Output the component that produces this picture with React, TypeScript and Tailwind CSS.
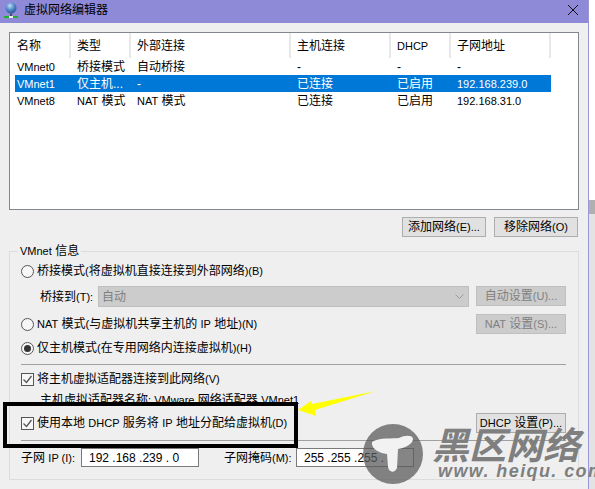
const sans = "font-['Liberation_Sans','Noto_Sans_CJK_SC',sans-serif]";

const columns = [
  { label: "名称", w: "w-[56px]", pl: "pl-[2px]" },
  { label: "类型", w: "w-[60px]", pl: "pl-[6px]" },
  { label: "外部连接", w: "w-[160px]", pl: "pl-[6px]" },
  { label: "主机连接", w: "w-[100px]", pl: "pl-[6px]" },
  { label: "DHCP", w: "w-[60px]", pl: "pl-[6px]" },
  { label: "子网地址", w: "w-[100px]", pl: "pl-[6px]" },
];

const rows = [
  { cells: [<L>VMnet0</L>, "桥接模式", "自动桥接", "-", "-", "-"], selected: false },
  { cells: [<L>VMnet1</L>, "仅主机...", "-", "已连接", "已启用", <L>192.168.239.0</L>], selected: true },
  { cells: [<L>VMnet8</L>, <><L>NAT</L> 模式</>, <><L>NAT</L> 模式</>, "已连接", "已启用", <L>192.168.31.0</L>], selected: false },
];

// latin runs sit a pixel smaller than the CJK in the original
function L({ children }: { children: React.ReactNode }) {
  return <span className="text-[11px]">{children}</span>;
}

function NetIcon() {
  return (
    <svg width="14" height="16" viewBox="0 0 14 16" className="shrink-0">
      <defs>
        <radialGradient id="globe" cx="0.4" cy="0.3" r="0.8">
          <stop offset="0" stopColor="#c4dcf4" />
          <stop offset="0.5" stopColor="#4f86c8" />
          <stop offset="1" stopColor="#274a86" />
        </radialGradient>
      </defs>
      <circle cx="7" cy="6" r="5.5" fill="url(#globe)" />
      <rect x="6" y="11.5" width="2" height="2.5" fill="#4a4a5a" />
      <rect x="0" y="14" width="14" height="2" fill="#1fae2f" />
      <rect x="5" y="14" width="4" height="2" fill="#e8f5e8" />
    </svg>
  );
}

function Radio({ checked }: { checked?: boolean }) {
  return (
    <span className="w-[13px] h-[13px] rounded-full border border-[#555] bg-[#f7f7f7] flex items-center justify-center shrink-0">
      {checked && <span className="w-[7px] h-[7px] rounded-full bg-[#333]" />}
    </span>
  );
}

function Check() {
  return (
    <span className="w-[13px] h-[13px] border border-[#555] bg-[#f7f7f7] flex items-center justify-center shrink-0">
      <svg width="11" height="11" viewBox="0 0 11 11">
        <path d="M1.5 5.5 L4.5 8.5 L9.5 2" stroke="#555" strokeWidth="1.3" fill="none" />
      </svg>
    </span>
  );
}

function Btn({ children, w, disabled }: { children: React.ReactNode; w: string; disabled?: boolean }) {
  return (
    <div className={`${w} h-5 flex items-center justify-center border text-xs whitespace-pre shrink-0 ${disabled ? "border-[#bfbfbf] bg-[#cccccc] text-[#808080]" : "border-[#adadad] bg-[#e1e1e1] text-black"}`}>
      {children}
    </div>
  );
}

function IpBox({ value, w }: { value: string; w: string }) {
  return (
    <div className={`${w} h-[19px] border border-[#7a7a7a] bg-white text-xs flex items-center pl-[7px] whitespace-pre shrink-0`}>
      {value}
    </div>
  );
}

export default function App() {
  return (
    <div className={`relative w-[595px] h-[489px] overflow-hidden flex text-black text-xs ${sans}`}>
      <div className="w-[589px] h-full bg-[#efefef] flex flex-col border-r border-[#9a98d8] shrink-0">
        <div className="h-[23px] bg-[#8e8ad8] flex items-center pl-1 pr-[10px] pb-[3px] shrink-0">
          <NetIcon />
          <span className="ml-[6px]">虚拟网络编辑器</span>
          <svg className="ml-auto" width="10" height="10" viewBox="0 0 10 10">
            <path d="M0 0 L10 10 M10 0 L0 10" stroke="#111" strokeWidth="1" fill="none" />
          </svg>
        </div>

        <div className="flex-1 flex flex-col pl-[9px] pt-[9px]">
          <div className="w-[570px] h-[178px] border border-[#82878f] bg-white pl-[5px] shrink-0">
            <div className="flex h-[25px] items-center">
              {columns.map((c) => (
                <div key={c.label} className={`${c.w} ${c.pl} h-full pt-px flex items-center border-r-2 border-[#e8e8e8]`}>
                  {c.label === "DHCP" ? <L>{c.label}</L> : c.label}
                </div>
              ))}
            </div>
            {rows.map((r, n) => (
              <div key={n} className={`flex h-[17px] w-[536px] items-center ${r.selected ? "bg-[#0078d7] text-white" : ""}`}>
                {r.cells.map((t, i) => (
                  <div key={i} className={`${columns[i].w} ${columns[i].pl} whitespace-nowrap`}>{t}</div>
                ))}
              </div>
            ))}
          </div>

          <div className="flex justify-end gap-2 mt-[7px] w-[570px] pr-px">
            <Btn w="w-[84px]">添加网络<L>(E)...</L></Btn>
            <Btn w="w-[84px]">移除网络<L>(O)</L></Btn>
          </div>

          <fieldset className="mt-[7px] w-[570px] h-[236px] border border-[#dcdcdc] pl-[11px] pr-[12px] flex-none">
            <legend className="ml-[-3px] px-[2px] h-[14px] leading-[15px]"><L>VMnet</L> 信息</legend>
            <div className="flex items-center gap-[3px] h-[14px] mt-[6px]">
              <Radio />
              <span>桥接模式<L>(</L>将虚拟机直接连接到外部网络<L>)(B)</L></span>
            </div>
            <div className="flex items-center mt-[8px]">
              <span className="ml-[19px] w-[58px] pt-px">桥接到<L>(T):</L></span>
              <div className="w-[371px] h-[21px] bg-[#cccccc] border border-[#bfbfbf] text-[#808080] flex items-center pl-[3px]">
                自动
                <svg className="ml-auto mr-[4px]" width="9" height="5" viewBox="0 0 9 5">
                  <path d="M0.5 0.5 L4.5 4.5 L8.5 0.5" stroke="#9a9a9a" fill="none" />
                </svg>
              </div>
              <div className="ml-[7px] self-start"><Btn w="w-[90px]" disabled>自动设置<L>(U)...</L></Btn></div>
            </div>
            <div className="flex items-center mt-[7px]">
              <Radio />
              <span className="ml-[3px]"><L>NAT</L> 模式<L>(</L>与虚拟机共享主机的 <L>IP</L> 地址<L>)(N)</L></span>
              <div className="ml-auto"><Btn w="w-[90px]" disabled><L>NAT</L> 设置<L>(S)...</L></Btn></div>
            </div>
            <div className="flex items-center gap-[3px] h-[14px] mt-[7px]">
              <Radio checked />
              <span>仅主机模式<L>(</L>在专用网络内连接虚拟机<L>)(H)</L></span>
            </div>
            <div className="h-px bg-[#a0a0a0] mt-[9px]" />
            <div className="flex items-center gap-[3px] h-[14px] mt-[7px]">
              <Check />
              <span>将主机虚拟适配器连接到此网络<L>(V)</L></span>
            </div>
            <div className="ml-[19px] mt-[7px] h-[14px] leading-[14px] whitespace-nowrap">主机虚拟适配器名称<L>: VMware</L> 网络适配器 <L>VMnet1</L></div>
            <div className="flex items-center mt-[6px]">
              <Check />
              <span className="ml-[3px]">使用本地 <L>DHCP</L> 服务将 <L>IP</L> 地址分配给虚拟机<L>(D)</L></span>
              <div className="ml-auto"><Btn w="w-[90px]"><L>DHCP</L> 设置<L>(P)...</L></Btn></div>
            </div>
            <div className="h-px bg-[#a0a0a0] mt-[7px]" />
            <div className="flex items-center mt-[7px]">
              <span className="w-[60px] shrink-0">子网 <L>IP (I):</L></span>
              <IpBox value="192 .168 .239 . 0" w="w-[118px]" />
              <span className="ml-[25px] w-[72px] shrink-0">子网掩码<L>(M):</L></span>
              <IpBox value="255 .255 .255 . 0" w="w-[118px]" />
            </div>
          </fieldset>
        </div>
      </div>

      {/* desktop behind the window */}
      <div className="flex-1 flex flex-col">
        <div className="h-[200px] bg-white" />
        <div className="h-[14px] bg-[#b0b0b0]" />
        <div className="flex-1 bg-[#e3e3e3]" />
      </div>

      {/* annotation */}
      <div className="absolute left-[3px] top-[402px] w-[295px] h-[46px] border-4 border-black" />
      <svg className="absolute left-[296px] top-[388px]" width="85" height="30" viewBox="0 0 85 30">
        <path d="M2 22 L15 13 L16 16 L80 3 L19 22 L20 28 Z" fill="#ffff00" />
      </svg>

      {/* watermark */}
      <div className="absolute left-[363px] top-[424px] w-[60px] h-[60px] rounded-full bg-[#5c5c5c]/75">
        <svg width="60" height="60" viewBox="0 0 60 60">
          <path d="M9 18 C16 13 30 15 36 14 C42 11 50 11 50 15 C50 20 42 24 35 25 L34 44 C32 49 26 49 25 43 L24 30 C16 29 8 25 9 18 Z" fill="#f2f2f2" />
        </svg>
      </div>
      <div className="absolute left-[432px] top-[427px] text-[37px] leading-[40px] font-bold italic text-[#7f7f7f] whitespace-nowrap">黑区网络</div>
      <div className="absolute left-[438px] top-[460px] text-[18px] leading-[22px] font-bold italic text-[#7f7f7f] tracking-[1.4px] whitespace-nowrap">www. heiqu. com</div>
    </div>
  );
}
